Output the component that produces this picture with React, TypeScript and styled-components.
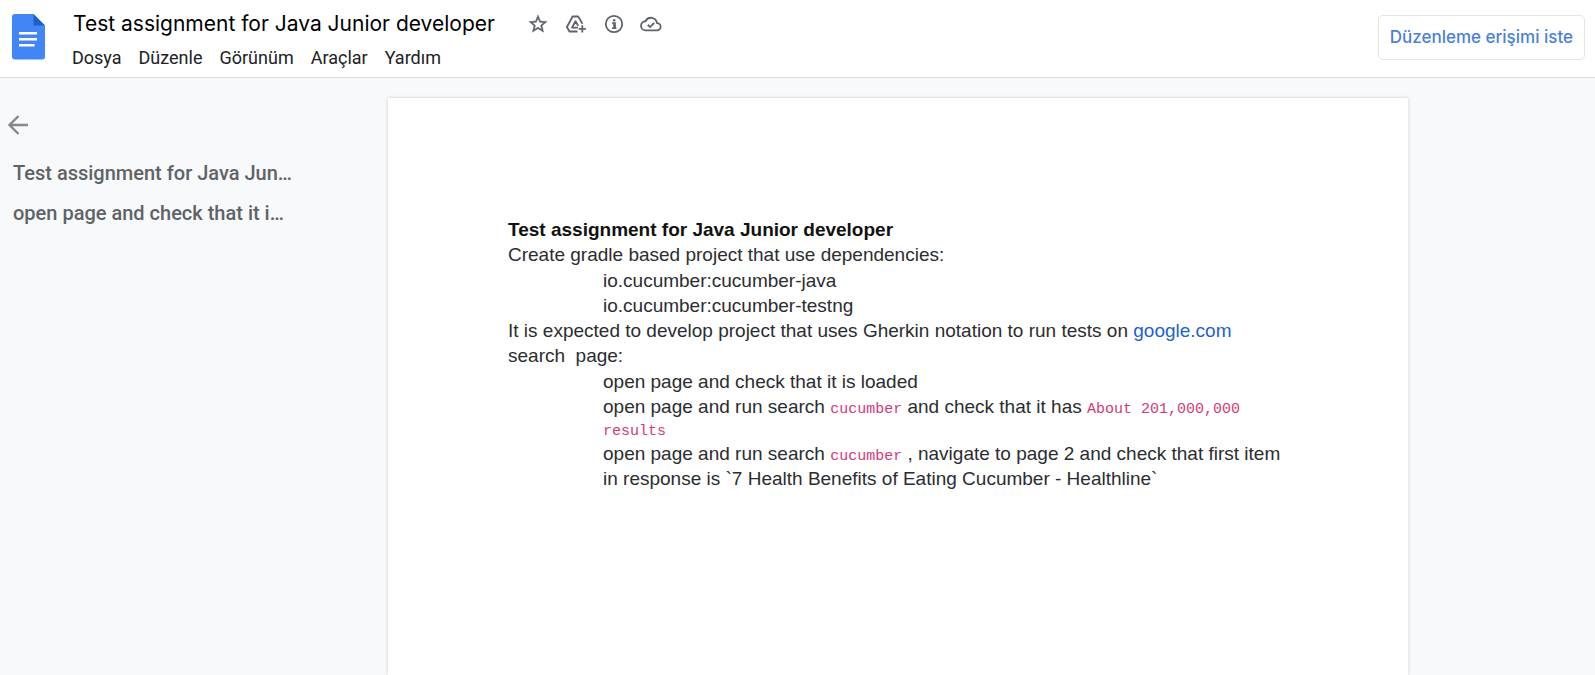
import React from 'react';
import styled, { createGlobalStyle } from 'styled-components';

const GlobalStyle = createGlobalStyle`
  *, *::before, *::after {
    box-sizing: border-box;
  }
  body {
    margin: 0;
    background: #f8f9fb;
    font-family: Roboto, sans-serif;
    color: #202124;
  }
`;

const Shell = styled.div`
  display: flex;
  flex-direction: column;
  height: 100vh;
  overflow: hidden;
`;

const Header = styled.header`
  display: flex;
  align-items: flex-start;
  flex: none;
  padding: 8px 10px 5px 12px;
  background: #ffffff;
  border-bottom: 1px solid #d9dbde;
`;

const HomeLink = styled.a`
  display: block;
  margin: 6px 27px 0 0;
  line-height: 0;
`;

const TitleArea = styled.div`
  display: flex;
  flex-direction: column;
  flex: 1;
  gap: 4px;
`;

const TitleRow = styled.div`
  display: flex;
  align-items: center;
  gap: 32px;
`;

const DocTitle = styled.h1`
  margin: 0 0 0 1px;
  font: 400 21px/32px Inter, sans-serif;
  color: #000000;
  white-space: nowrap;
`;

const TitleActions = styled.div`
  display: flex;
  align-items: center;
  gap: 15px;
`;

const IconButton = styled.button<{ $tone?: string }>`
  display: block;
  padding: 0;
  border: 0;
  background: none;
  color: ${(p) => p.$tone ?? '#5f6368'};
  line-height: 0;
  cursor: pointer;
`;

const MenuBar = styled.nav`
  display: flex;
  gap: 17px;
`;

const MenuButton = styled.button`
  padding: 0;
  border: 0;
  background: none;
  font: 400 18px/28px Roboto, sans-serif;
  color: #202124;
  cursor: pointer;
`;

const RequestButton = styled.button`
  margin-top: 7px;
  padding: 0 11px;
  border: 1px solid #e2e4e7;
  border-radius: 5px;
  background: #ffffff;
  font: 500 17px/43px Inter, sans-serif;
  color: #4a7fe0;
  white-space: nowrap;
  cursor: pointer;
`;

const Workspace = styled.div`
  display: flex;
  flex: 1;
  min-height: 0;
`;

const Outline = styled.aside`
  flex: none;
  width: 388px;
  padding: 35px 94px 0 6px;
`;

const OutlineList = styled.ul`
  margin: 16px 0 0;
  padding: 0;
  list-style: none;
`;

const OutlineLink = styled.a`
  display: block;
  padding-left: 7px;
  font-size: 20px;
  font-weight: 500;
  line-height: 40px;
  color: #5f6368;
  text-decoration: none;
  white-space: nowrap;
`;

const Sheet = styled.main`
  flex: 0 1 1020px;
  margin-top: 20px;
  padding: 119px 120px 0;
  background: #ffffff;
  box-shadow: 0 0 3px rgba(60, 64, 67, 0.25);
  font-family: 'Liberation Sans', Arial, sans-serif;
  font-size: 19px;
  line-height: 25px;
  color: #2b2d30;
`;

const DocHeading = styled.h2`
  margin: 0;
  font-size: 19px;
  font-weight: 700;
  color: #111111;
`;

const Paragraph = styled.p`
  margin: 0;
`;

const DocLink = styled.a`
  color: #1f5fd0;
  text-decoration: none;
`;

const Steps = styled.ul`
  margin: 1px 0 0;
  padding: 0 0 0 95px;
  list-style: none;
`;

const Step = styled.li`
  font-size: 15px;
  line-height: 21px;
`;

const Prose = styled.span`
  font-size: 19px;
  line-height: 25px;
`;

const Snippet = styled.code`
  font: 15px/18px 'Liberation Mono', 'Courier New', monospace;
  color: #d63a76;
`;

const DocsLogo = () => (
  <svg width="33" height="46" viewBox="0 0 33 46" aria-hidden="true">
    <path d="M3 0h18.500l11.500 11.500V42.500a3 3 0 0 1-3 3H3a3 3 0 0 1-3-3V3a3 3 0 0 1 3-3z" fill="#4285f4" />
    <path d="M21.500 0L33 11.500H21.500z" fill="#1a62c9" />
    <path d="M7 18h18v2.500H7zM7 24h18v2.500H7zM7 30h15.500v2.500H7z" fill="#ffffff" />
  </svg>
);

const StarIcon = () => (
  <svg width="22" height="22" viewBox="0 0 24 24" fill="currentColor" stroke="currentColor" strokeWidth="0.400" aria-hidden="true">
    <path d="M22 9.240l-7.190-.620L12 2 9.190 8.630 2 9.240l5.460 4.730L5.820 21 12 17.270 18.180 21l-1.630-7.030L22 9.240zM12 15.400l-3.760 2.270 1-4.280-3.320-2.880 4.380-.380L12 6.100l1.710 4.040 4.380.380-3.320 2.880 1 4.280L12 15.400z" />
  </svg>
);

const DriveAddIcon = () => (
  <svg width="24" height="22" viewBox="0 0 24 22" fill="none" stroke="currentColor" strokeWidth="1.800" aria-hidden="true">
    <path d="M13.500 18.500H5.500L2.900 14 8.600 3.500h5.600l4.300 7.200" strokeLinejoin="round" />
    <path d="M14 14.600H8l3.500-6.400 2.700 4.600" strokeLinejoin="round" />
    <path d="M18.300 12.200v7.200M14.700 15.800h7.200" />
  </svg>
);

const InfoIcon = () => (
  <svg width="22" height="22" viewBox="0 0 22 22" fill="none" stroke="currentColor" strokeWidth="1.800" aria-hidden="true">
    <circle cx="11" cy="11" r="8.200" />
    <path d="M9 10h3v5M9 15.200h4.500" strokeWidth="1.600" />
    <path d="M11.200 10v5" strokeWidth="2" />
    <path d="M9.900 6.200h2.500v2.200H9.900z" fill="currentColor" stroke="none" />
  </svg>
);

const CloudDoneIcon = () => (
  <svg width="22" height="22" viewBox="0 0 24 24" fill="none" stroke="currentColor" strokeWidth="2" aria-hidden="true">
    <path d="M18.500 11A6.600 6.600 0 0 0 6 9a5 5 0 0 0 .300 10H18.500a4 4 0 0 0 0-8z" strokeLinejoin="round" />
    <path d="M8.500 12.800l2.500 2.500 4.500-4.500" />
  </svg>
);

const BackIcon = () => (
  <svg width="24" height="24" viewBox="0 0 24 24" fill="none" stroke="currentColor" strokeWidth="2.400" aria-hidden="true">
    <path d="M22 12H3.500M12.500 3L3.500 12l9 9" />
  </svg>
);

const menus = ['Dosya', 'Düzenle', 'Görünüm', 'Araçlar', 'Yardım'];
const outline = ['Test assignment for Java Jun…', 'open page and check that it i…'];

export default function App() {
  return (
    <Shell>
      <GlobalStyle />
      <Header>
        <HomeLink href="#" aria-label="Docs">
          <DocsLogo />
        </HomeLink>
        <TitleArea>
          <TitleRow>
            <DocTitle>Test assignment for Java Junior developer</DocTitle>
            <TitleActions>
              <IconButton aria-label="Yıldız ekle"><StarIcon /></IconButton>
              <IconButton aria-label="Drive'a ekle"><DriveAddIcon /></IconButton>
              <IconButton aria-label="Bilgi"><InfoIcon /></IconButton>
              <IconButton aria-label="Belge durumu"><CloudDoneIcon /></IconButton>
            </TitleActions>
          </TitleRow>
          <MenuBar>
            {menus.map((label) => (
              <MenuButton key={label}>{label}</MenuButton>
            ))}
          </MenuBar>
        </TitleArea>
        <RequestButton>Düzenleme erişimi iste</RequestButton>
      </Header>
      <Workspace>
        <Outline>
          <IconButton $tone="#85888c" aria-label="Geri"><BackIcon /></IconButton>
          <OutlineList>
            {outline.map((label) => (
              <li key={label}>
                <OutlineLink href="#">{label}</OutlineLink>
              </li>
            ))}
          </OutlineList>
        </Outline>
        <Sheet>
          <DocHeading>Test assignment for Java Junior developer</DocHeading>
          <Paragraph>Create gradle based project that use dependencies:</Paragraph>
          <Steps>
            <Step><Prose>io.cucumber:cucumber-java</Prose></Step>
            <Step><Prose>io.cucumber:cucumber-testng</Prose></Step>
          </Steps>
          <Paragraph>
            It is expected to develop project that uses Gherkin notation to run tests on{' '}
            <DocLink href="#">google.com</DocLink> search&nbsp; page:
          </Paragraph>
          <Steps>
            <Step><Prose>open page and check that it is loaded</Prose></Step>
            <Step>
              <Prose>open page and run search </Prose>
              <Snippet>cucumber</Snippet>
              <Prose> and check that it has </Prose>
              <Snippet>About 201,000,000 results</Snippet>
            </Step>
            <Step>
              <Prose>open page and run search </Prose>
              <Snippet>cucumber</Snippet>
              <Prose> , navigate to page 2 and check that first item in response is `7 Health Benefits of Eating Cucumber - Healthline`</Prose>
            </Step>
          </Steps>
        </Sheet>
      </Workspace>
    </Shell>
  );
}
